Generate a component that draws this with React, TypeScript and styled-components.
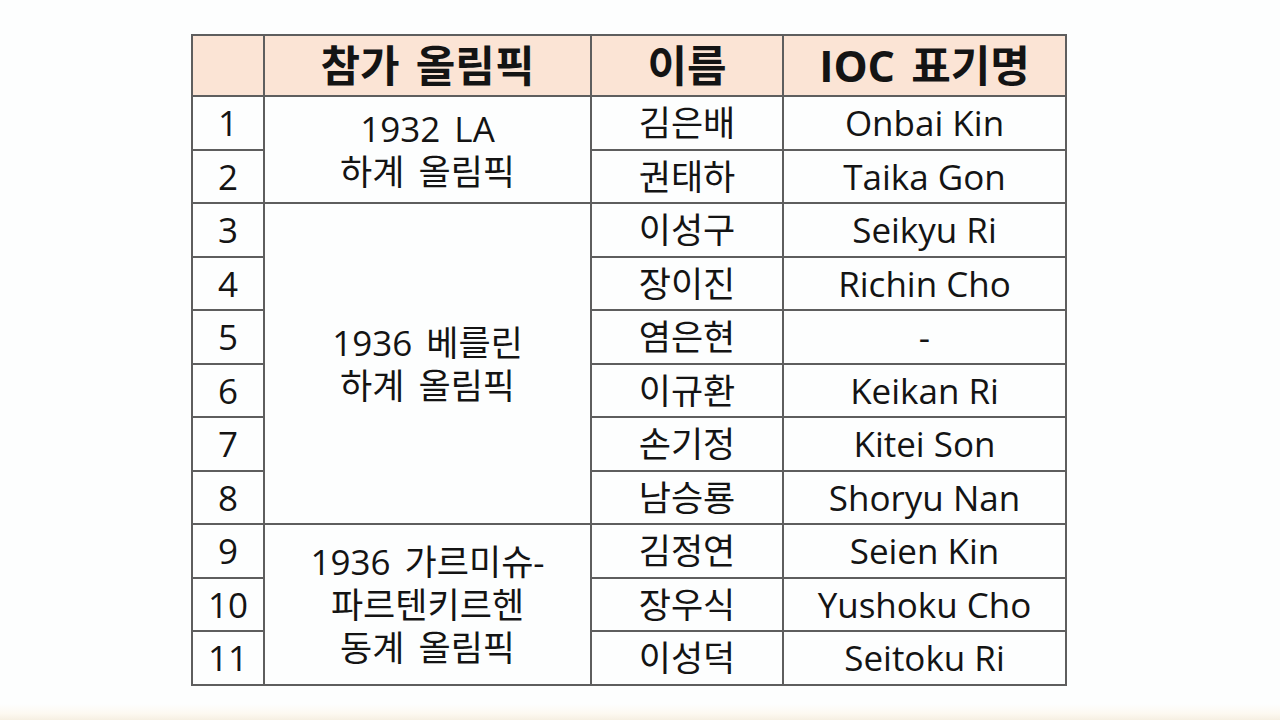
import React from "react";
import styled, { createGlobalStyle } from "styled-components";

const GlobalStyle = createGlobalStyle`
  html, body {
    margin: 0;
    padding: 0;
    background: #fdfefe;
  }
  body {
    font-family: "Open Sans", "Noto Sans CJK KR", sans-serif;
    color: #141414;
  }
`;

const Page = styled.div`
  width: 1280px;
  height: 720px;
  overflow: hidden;
  display: flex;
  flex-direction: column;
  justify-content: space-between;
`;

const TableArea = styled.div`
  padding: 34px 0 0 191px;
`;

const BottomGlow = styled.div`
  height: 16px;
  background: linear-gradient(
    to bottom,
    #fdfefe 0%,
    #fdf9f1 60%,
    #f6efe2 100%
  );
`;

const Table = styled.table`
  border-collapse: collapse;
  width: 874px;
  table-layout: fixed;
`;

const HeadRow = styled.tr`
  height: 61px;
  background: #fbe4d5;
`;

const BodyRow = styled.tr`
  height: 53.5px;
`;

const HeadCell = styled.th`
  border: 2px solid #5e5e5e;
  font-family: "Open Sans", "Noto Sans CJK KR", sans-serif;
  font-size: 43px;
  font-weight: 700;
  text-align: center;
  vertical-align: middle;
  padding: 0;
  line-height: 1;
  word-spacing: 5px;
  white-space: nowrap;
`;

const Cell = styled.td<{ $lines?: boolean }>`
  border: 2px solid #5e5e5e;
  font-size: 35px;
  font-weight: 400;
  text-align: center;
  vertical-align: middle;
  padding: 0;
  line-height: ${(p) => (p.$lines ? "43px" : "1")};
  word-spacing: ${(p) => (p.$lines ? "5px" : "0")};
  white-space: nowrap;
`;

const Line = styled.div``;

interface Athlete {
  no: number;
  name: string;
  ioc: string;
}

interface Games {
  lines: string[];
  athletes: Athlete[];
}

const games: Games[] = [
  {
    lines: ["1932 LA", "하계 올림픽"],
    athletes: [
      { no: 1, name: "김은배", ioc: "Onbai Kin" },
      { no: 2, name: "권태하", ioc: "Taika Gon" },
    ],
  },
  {
    lines: ["1936 베를린", "하계 올림픽"],
    athletes: [
      { no: 3, name: "이성구", ioc: "Seikyu Ri" },
      { no: 4, name: "장이진", ioc: "Richin Cho" },
      { no: 5, name: "염은현", ioc: "-" },
      { no: 6, name: "이규환", ioc: "Keikan Ri" },
      { no: 7, name: "손기정", ioc: "Kitei Son" },
      { no: 8, name: "남승룡", ioc: "Shoryu Nan" },
    ],
  },
  {
    lines: ["1936 가르미슈-", "파르텐키르헨", "동계 올림픽"],
    athletes: [
      { no: 9, name: "김정연", ioc: "Seien Kin" },
      { no: 10, name: "장우식", ioc: "Yushoku Cho" },
      { no: 11, name: "이성덕", ioc: "Seitoku Ri" },
    ],
  },
];

const App: React.FC = () => {
  return (
    <Page>
      <GlobalStyle />
      <TableArea>
        <Table>
          <colgroup>
            <col style={{ width: "72px" }} />
            <col style={{ width: "327px" }} />
            <col style={{ width: "192px" }} />
            <col style={{ width: "283px" }} />
          </colgroup>
          <thead>
            <HeadRow>
              <HeadCell></HeadCell>
              <HeadCell>참가 올림픽</HeadCell>
              <HeadCell>이름</HeadCell>
              <HeadCell>IOC 표기명</HeadCell>
            </HeadRow>
          </thead>
          <tbody>
            {games.map((g) =>
              g.athletes.map((a, i) => (
                <BodyRow key={a.no}>
                  <Cell>{a.no}</Cell>
                  {i === 0 && (
                    <Cell $lines rowSpan={g.athletes.length}>
                      {g.lines.map((l) => (
                        <Line key={l}>{l}</Line>
                      ))}
                    </Cell>
                  )}
                  <Cell>{a.name}</Cell>
                  <Cell>{a.ioc}</Cell>
                </BodyRow>
              ))
            )}
          </tbody>
        </Table>
      </TableArea>
      <BottomGlow />
    </Page>
  );
};

export default App;
